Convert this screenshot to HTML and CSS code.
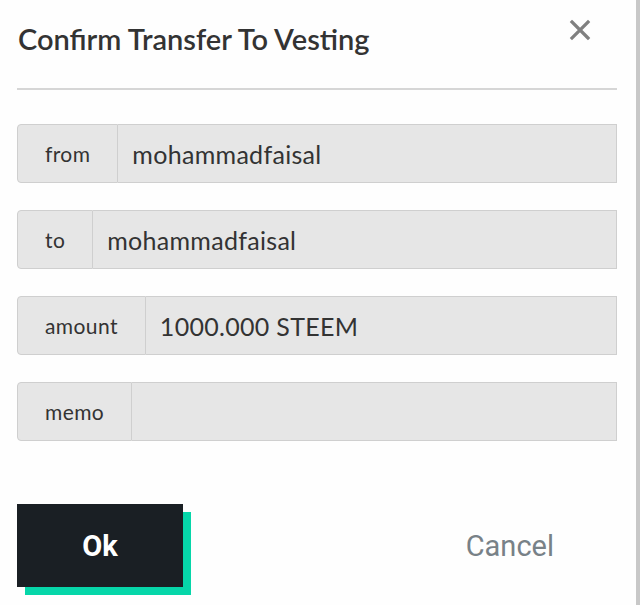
FILE: index.html
```html
<!DOCTYPE html>
<html lang="en">

<head>
  <meta charset="UTF-8" />
  <meta name="viewport" content="width=device-width, initial-scale=1.0" />
  <title>Confirm Transfer To Vesting</title>
  <link rel="stylesheet" href="styles.css">
</head>

<body>
  <div class="modal">
    <div class="modal-header">
      <h3>Confirm Transfer To Vesting</h3>
      <button class="close" aria-label="close">
        <svg width="22" height="22" viewBox="0 0 22 22">
          <path d="M3 3 L19 19 M19 3 L3 19" stroke="#808080" stroke-width="3.2" stroke-linecap="square" />
        </svg>
      </button>
    </div>

    <div class="modal-body">
      <div class="input-group">
        <span class="label">from</span>
        <div class="field">mohammadfaisal</div>
      </div>
      <div class="input-group">
        <span class="label">to</span>
        <div class="field">mohammadfaisal</div>
      </div>
      <div class="input-group">
        <span class="label">amount</span>
        <div class="field">1000.000 STEEM</div>
      </div>
      <div class="input-group">
        <span class="label">memo</span>
        <div class="field"></div>
      </div>
    </div>

    <div class="modal-footer">
      <button class="btn-ok">Ok</button>
      <button class="btn-cancel">Cancel</button>
    </div>
  </div>
</body>

</html>
```

FILE: styles.css
```css
* {
  box-sizing: border-box;
}

html,
body {
  margin: 0;
  height: 100%;
}

body {
  background: #fefefe;
  border-right: 4px solid #c8c8c8;
  font-family: "Source Sans Pro", Lato, "Noto Sans", sans-serif;
  color: #333;
}

.modal {
  padding: 0 19px 0 17px;
}

.modal-header {
  height: 90px;
  border-bottom: 2px solid #d6d6d6;
  display: flex;
  justify-content: space-between;
  align-items: flex-start;
  padding-left: 1px;
}

.modal-header h3 {
  margin: 21px 0 0;
  font-size: 29px;
  font-weight: 600;
  color: #333;
}

.close {
  appearance: none;
  border: none;
  background: none;
  padding: 0;
  margin: 19px 26px 0 0;
  cursor: pointer;
}

.modal-body {
  padding-top: 34px;
  display: flex;
  flex-direction: column;
  gap: 27px;
}

.input-group {
  display: flex;
  height: 59px;
}

.input-group .label {
  display: flex;
  align-items: center;
  padding: 0 27px;
  background: #e6e6e6;
  border: 1px solid #cfcfcf;
  border-radius: 4px 0 0 4px;
  font-size: 21px;
  letter-spacing: 0.4px;
  color: #333;
}

.input-group .field {
  flex: 1;
  display: flex;
  align-items: center;
  padding-left: 14px;
  background: #e6e6e6;
  border: 1px solid #cfcfcf;
  border-left: none;
  font-size: 25px;
  letter-spacing: 0.3px;
  color: #333;
}

.modal-footer {
  margin-top: 63px;
  display: flex;
  justify-content: space-between;
  align-items: center;
}

.btn-ok {
  width: 166px;
  height: 83px;
  border: none;
  background: #1a1f24;
  box-shadow: 8px 8px 0 #06d6a9;
  color: #fff;
  font-family: Roboto, sans-serif;
  font-size: 29px;
  font-weight: 700;
  cursor: pointer;
}

.btn-cancel {
  appearance: none;
  border: none;
  background: none;
  margin-right: 63px;
  padding: 0;
  font-family: Roboto, sans-serif;
  font-size: 29px;
  color: #788187;
  cursor: pointer;
}
```
